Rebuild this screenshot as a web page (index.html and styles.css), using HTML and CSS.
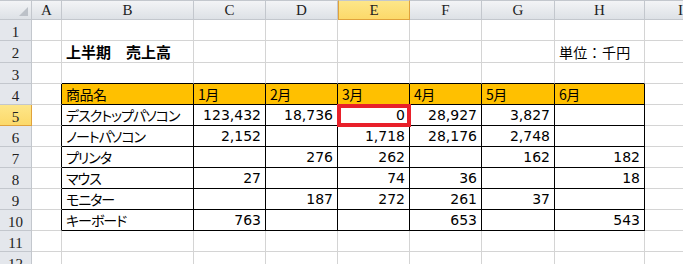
FILE: index.html
```html
<!DOCTYPE html>
<html lang="ja">
<head>
  <meta charset="UTF-8">
  <title>上半期 売上高</title>
  <link rel="stylesheet" href="styles.css">
</head>
<body>
<table class="sheet">
  <colgroup>
    <col class="w-rh"><col class="w-a"><col class="w-b">
    <col class="w-n"><col class="w-n"><col class="w-n"><col class="w-n"><col class="w-g">
    <col class="w-h"><col class="w-n">
  </colgroup>
  <tr class="hdr">
    <td class="corner"><span class="tri"></span></td>
    <td class="ch">A</td><td class="ch">B</td><td class="ch">C</td><td class="ch">D</td>
    <td class="ch sel">E</td><td class="ch">F</td><td class="ch">G</td><td class="ch">H</td><td class="ch">I</td>
  </tr>
  <tr>
    <td class="rh">1</td><td></td><td></td><td></td><td></td><td></td><td></td><td></td><td></td><td></td>
  </tr>
  <tr class="tall">
    <td class="rh">2</td><td></td><td class="title">上半期　売上高</td><td></td><td></td><td></td><td></td><td></td>
    <td class="unit">単位：千円</td><td></td>
  </tr>
  <tr>
    <td class="rh">3</td><td></td>
    <td class="tt"></td><td class="tt"></td><td class="tt"></td><td class="tt"></td><td class="tt"></td><td class="tt"></td><td class="tt"></td>
    <td></td>
  </tr>
  <tr>
    <td class="rh">4</td><td class="tl"></td>
    <td class="t head">商品名</td><td class="t head">1月</td><td class="t head">2月</td><td class="t head">3月</td>
    <td class="t head">4月</td><td class="t head">5月</td><td class="t head">6月</td><td></td>
  </tr>
  <tr>
    <td class="rh sel">5</td><td class="tl"></td>
    <td class="t jp">デスクトップパソコン</td><td class="t num">123,432</td><td class="t num">18,736</td>
    <td class="t num active">0</td><td class="t num">28,927</td><td class="t num">3,827</td><td class="t num"></td><td></td>
  </tr>
  <tr>
    <td class="rh">6</td><td class="tl"></td>
    <td class="t jp">ノートパソコン</td><td class="t num">2,152</td><td class="t num"></td>
    <td class="t num">1,718</td><td class="t num">28,176</td><td class="t num">2,748</td><td class="t num"></td><td></td>
  </tr>
  <tr>
    <td class="rh">7</td><td class="tl"></td>
    <td class="t jp">プリンタ</td><td class="t num"></td><td class="t num">276</td>
    <td class="t num">262</td><td class="t num"></td><td class="t num">162</td><td class="t num">182</td><td></td>
  </tr>
  <tr>
    <td class="rh">8</td><td class="tl"></td>
    <td class="t jp">マウス</td><td class="t num">27</td><td class="t num"></td>
    <td class="t num">74</td><td class="t num">36</td><td class="t num"></td><td class="t num">18</td><td></td>
  </tr>
  <tr>
    <td class="rh">9</td><td class="tl"></td>
    <td class="t jp">モニター</td><td class="t num"></td><td class="t num">187</td>
    <td class="t num">272</td><td class="t num">261</td><td class="t num">37</td><td class="t num"></td><td></td>
  </tr>
  <tr>
    <td class="rh">10</td><td class="tl"></td>
    <td class="t jp">キーボード</td><td class="t num">763</td><td class="t num"></td>
    <td class="t num"></td><td class="t num">653</td><td class="t num"></td><td class="t num">543</td><td></td>
  </tr>
  <tr>
    <td class="rh">11</td><td></td><td></td><td></td><td></td><td></td><td></td><td></td><td></td><td></td>
  </tr>
  <tr>
    <td class="rh">12</td><td></td><td></td><td></td><td></td><td></td><td></td><td></td><td></td><td></td>
  </tr>
</table>
</body>
</html>
```

FILE: styles.css
```css
*{
  margin: 0;
  padding: 0;
}
body{
  background: #fff;
  overflow: hidden;
  font-family: "DejaVu Sans", "Noto Sans CJK JP", sans-serif;
  color: #000;
}
.sheet{
  border-collapse: separate;
  border-spacing: 0;
  table-layout: fixed;
  width: 717px;
}
.w-rh{ width: 32px; }
.w-a{ width: 30px; }
.w-b{ width: 132px; }
.w-n{ width: 72px; }
.w-g{ width: 73px; }
.w-h{ width: 90px; }

tr{ height: 21px; }
tr.tall{ height: 22px; }
tr.hdr{ height: 20px; }

td{
  border-right: 1px solid #d4d4d4;
  border-bottom: 1px solid #d4d4d4;
  padding: 0 4px;
  font-size: 14px;
  line-height: 16px;
  white-space: nowrap;
  overflow: hidden;
  vertical-align: middle;
}

/* 列・行見出し */
.corner,.ch,.rh{
  background: linear-gradient(#eef0f3, #dfe2e7);
  border-right: 1px solid #c3c7cd;
  border-bottom: 1px solid #c3c7cd;
  font-family: "Liberation Serif", "DejaVu Serif", serif;
  font-size: 15px;
  color: #222;
  text-align: center;
  padding: 0;
}
.ch,.corner{
  border-top: 1px solid #c3c7cd;
  background: linear-gradient(#f3f4f6, #dde1e6);
}
.rh{
  background: #e4e7ec;
  padding-top: 3px;
}
.ch.sel{
  background: linear-gradient(#fde689, #fcd96a);
  border-right: 1px solid #e0a23c;
  border-bottom: 1px solid #e0a23c;
  border-left: 1px solid #e0a23c;
}
.rh.sel{
  background: linear-gradient(#fde689, #fcd96a);
  border-right: 1px solid #e0a23c;
  border-bottom: 1px solid #e0a23c;
}
.corner{
  position: relative;
}
.tri{
  position: absolute;
  right: 3px;
  bottom: 3px;
  width: 0;
  height: 0;
  border-left: 9px solid transparent;
  border-bottom: 9px solid #bcc1c8;
}

/* 表 */
.t{
  border-right: 1px solid #000;
  border-bottom: 1px solid #000;
}
.tl{ border-right: 1px solid #000; }
.tt{ border-bottom: 1px solid #000; }
.head{
  background: #ffc000;
  font-family: "Noto Sans CJK JP", sans-serif;
  letter-spacing: -0.5px;
}
.jp{
  font-family: "Noto Sans CJK JP", sans-serif;
  font-feature-settings: "palt";
  letter-spacing: -1px;
}
.unit{
  font-family: "Noto Sans CJK JP", sans-serif;
  letter-spacing: 0.3px;
}
.num{
  text-align: right;
  padding-right: 4px;
}
.active{
  outline: 4px solid #e8202a;
  outline-offset: -3px;
}
.title{
  font-family: "Noto Sans CJK JP", sans-serif;
  font-weight: bold;
  font-size: 15px;
}
```
